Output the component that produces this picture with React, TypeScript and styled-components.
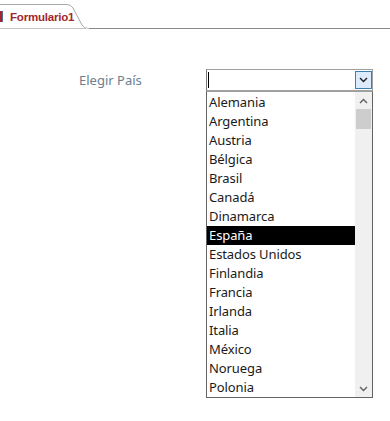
import React from 'react';
import styled, { createGlobalStyle } from 'styled-components';

const GlobalStyle = createGlobalStyle`
  html, body {
    margin: 0;
    padding: 0;
    background: #ffffff;
    font-family: "Noto Sans", "Open Sans", sans-serif;
  }
`

const countries = [
  'Alemania', 'Argentina', 'Austria', 'Bélgica', 'Brasil', 'Canadá', 'Dinamarca',
  'España', 'Estados Unidos', 'Finlandia', 'Francia', 'Irlanda', 'Italia',
  'México', 'Noruega', 'Polonia',
]

const Page = styled.div`
  width: 390px;
  height: 421px;
  overflow: hidden;
`

const TabStrip = styled.div`
  display: flex;
  align-items: flex-end;
  height: 29px;
  box-sizing: border-box;
  border-bottom: 1px solid #8a8a8a;
`

const Tab = styled.div`
  position: relative;
  height: 25px;
  width: 89px;
  margin-bottom: -1px;
  box-sizing: border-box;
  display: flex;
  align-items: center;
  padding: 1px 0 0 10px;
  color: #a4262c;
  font-weight: 700;
  font-size: 11.5px;
  letter-spacing: -0.2px;
  font-family: "Liberation Sans", Arial, sans-serif;
`

const TabOutline = styled.svg`
  position: absolute;
  left: 0;
  top: 0;
`

const TabMark = styled.div`
  position: absolute;
  left: 0;
  top: 7px;
  width: 2px;
  height: 11px;
  background: #a4262c;
  border-right: 1px solid #4f6b8e;
`

const Body = styled.div`
  display: flex;
  padding: 40px 0 0 79px;
`

const Label = styled.div`
  width: 127px;
  color: #6d7e91;
  font-size: 13px;
  line-height: 20px;
  margin-top: 1px;
`

const Combo = styled.div`
  display: flex;
  flex-direction: column;
  width: 167px;
`

const Field = styled.div`
  display: flex;
  height: 22px;
  box-sizing: border-box;
  border: 1px solid #a0a0a0;
  border-left-color: #7a7a7a;
`

const Caret = styled.div`
  width: 1px;
  height: 16px;
  margin: 2px 0 0 1px;
  background: #000;
`

const DropButton = styled.div`
  margin-left: auto;
  width: 17px;
  height: 18px;
  margin-top: 1px;
  box-sizing: border-box;
  border: 1px solid #3c7fb1;
  background: #dcecfc;
  display: flex;
  align-items: center;
  justify-content: center;
`

const List = styled.div`
  display: flex;
  height: 307px;
  box-sizing: border-box;
  border: 1px solid #646464;
  border-top-color: #a0a0a0;
`

const Items = styled.div`
  flex: 1;
  display: flex;
  flex-direction: column;
  padding-top: 1px;
`

const Item = styled.div<{ $selected?: boolean }>`
  height: 19px;
  line-height: 19px;
  padding-left: 2px;
  font-size: 13px;
  letter-spacing: -0.1px;
  color: ${p => (p.$selected ? '#ffffff' : '#1a1a1a')};
  background: ${p => (p.$selected ? '#000000' : 'transparent')};
  white-space: nowrap;
`

const ScrollBar = styled.div`
  width: 17px;
  background: #f0f0f0;
  display: flex;
  flex-direction: column;
`

const ScrollArrow = styled.div`
  height: 17px;
  display: flex;
  align-items: center;
  justify-content: center;
`

const Thumb = styled.div`
  height: 20px;
  margin-left: 1px;
  width: 15px;
  background: #cdcdcd;
`

const Track = styled.div`
  flex: 1;
`

const Chevron: React.FC<{ up?: boolean; color?: string }> = ({ up, color = '#404040' }) => (
  <svg width="9" height="6" viewBox="0 0 9 6">
    <path
      d={up ? 'M1 5 L4.5 1.5 L8 5' : 'M1 1 L4.5 4.5 L8 1'}
      fill="none"
      stroke={color}
      strokeWidth="1.4"
    />
  </svg>
)

export default function App() {
  return (
    <Page>
      <GlobalStyle />
      <TabStrip>
        <Tab>
          <TabOutline width="89" height="25" viewBox="0 0 89 25">
            <path
              d="M0 0.5 H67 Q71 0.5 73 4 L82 21 Q84 24.5 88 24.5 H89"
              fill="#ffffff"
              stroke="#a8a8a8"
              strokeWidth="1"
            />
            <path d="M0 25 H89" stroke="#ffffff" strokeWidth="1" />
          </TabOutline>
          <TabMark />
          <span style={{ position: 'relative' }}>Formulario1</span>
        </Tab>
      </TabStrip>
      <Body>
        <Label>Elegir País</Label>
        <Combo>
          <Field>
            <Caret />
            <DropButton>
              <Chevron color="#202020" />
            </DropButton>
          </Field>
          <List>
            <Items>
              {countries.map(c => (
                <Item key={c} $selected={c === 'España'}>{c}</Item>
              ))}
            </Items>
            <ScrollBar>
              <ScrollArrow>
                <Chevron up color="#606060" />
              </ScrollArrow>
              <Thumb />
              <Track />
              <ScrollArrow>
                <Chevron color="#606060" />
              </ScrollArrow>
            </ScrollBar>
          </List>
        </Combo>
      </Body>
    </Page>
  )
}
